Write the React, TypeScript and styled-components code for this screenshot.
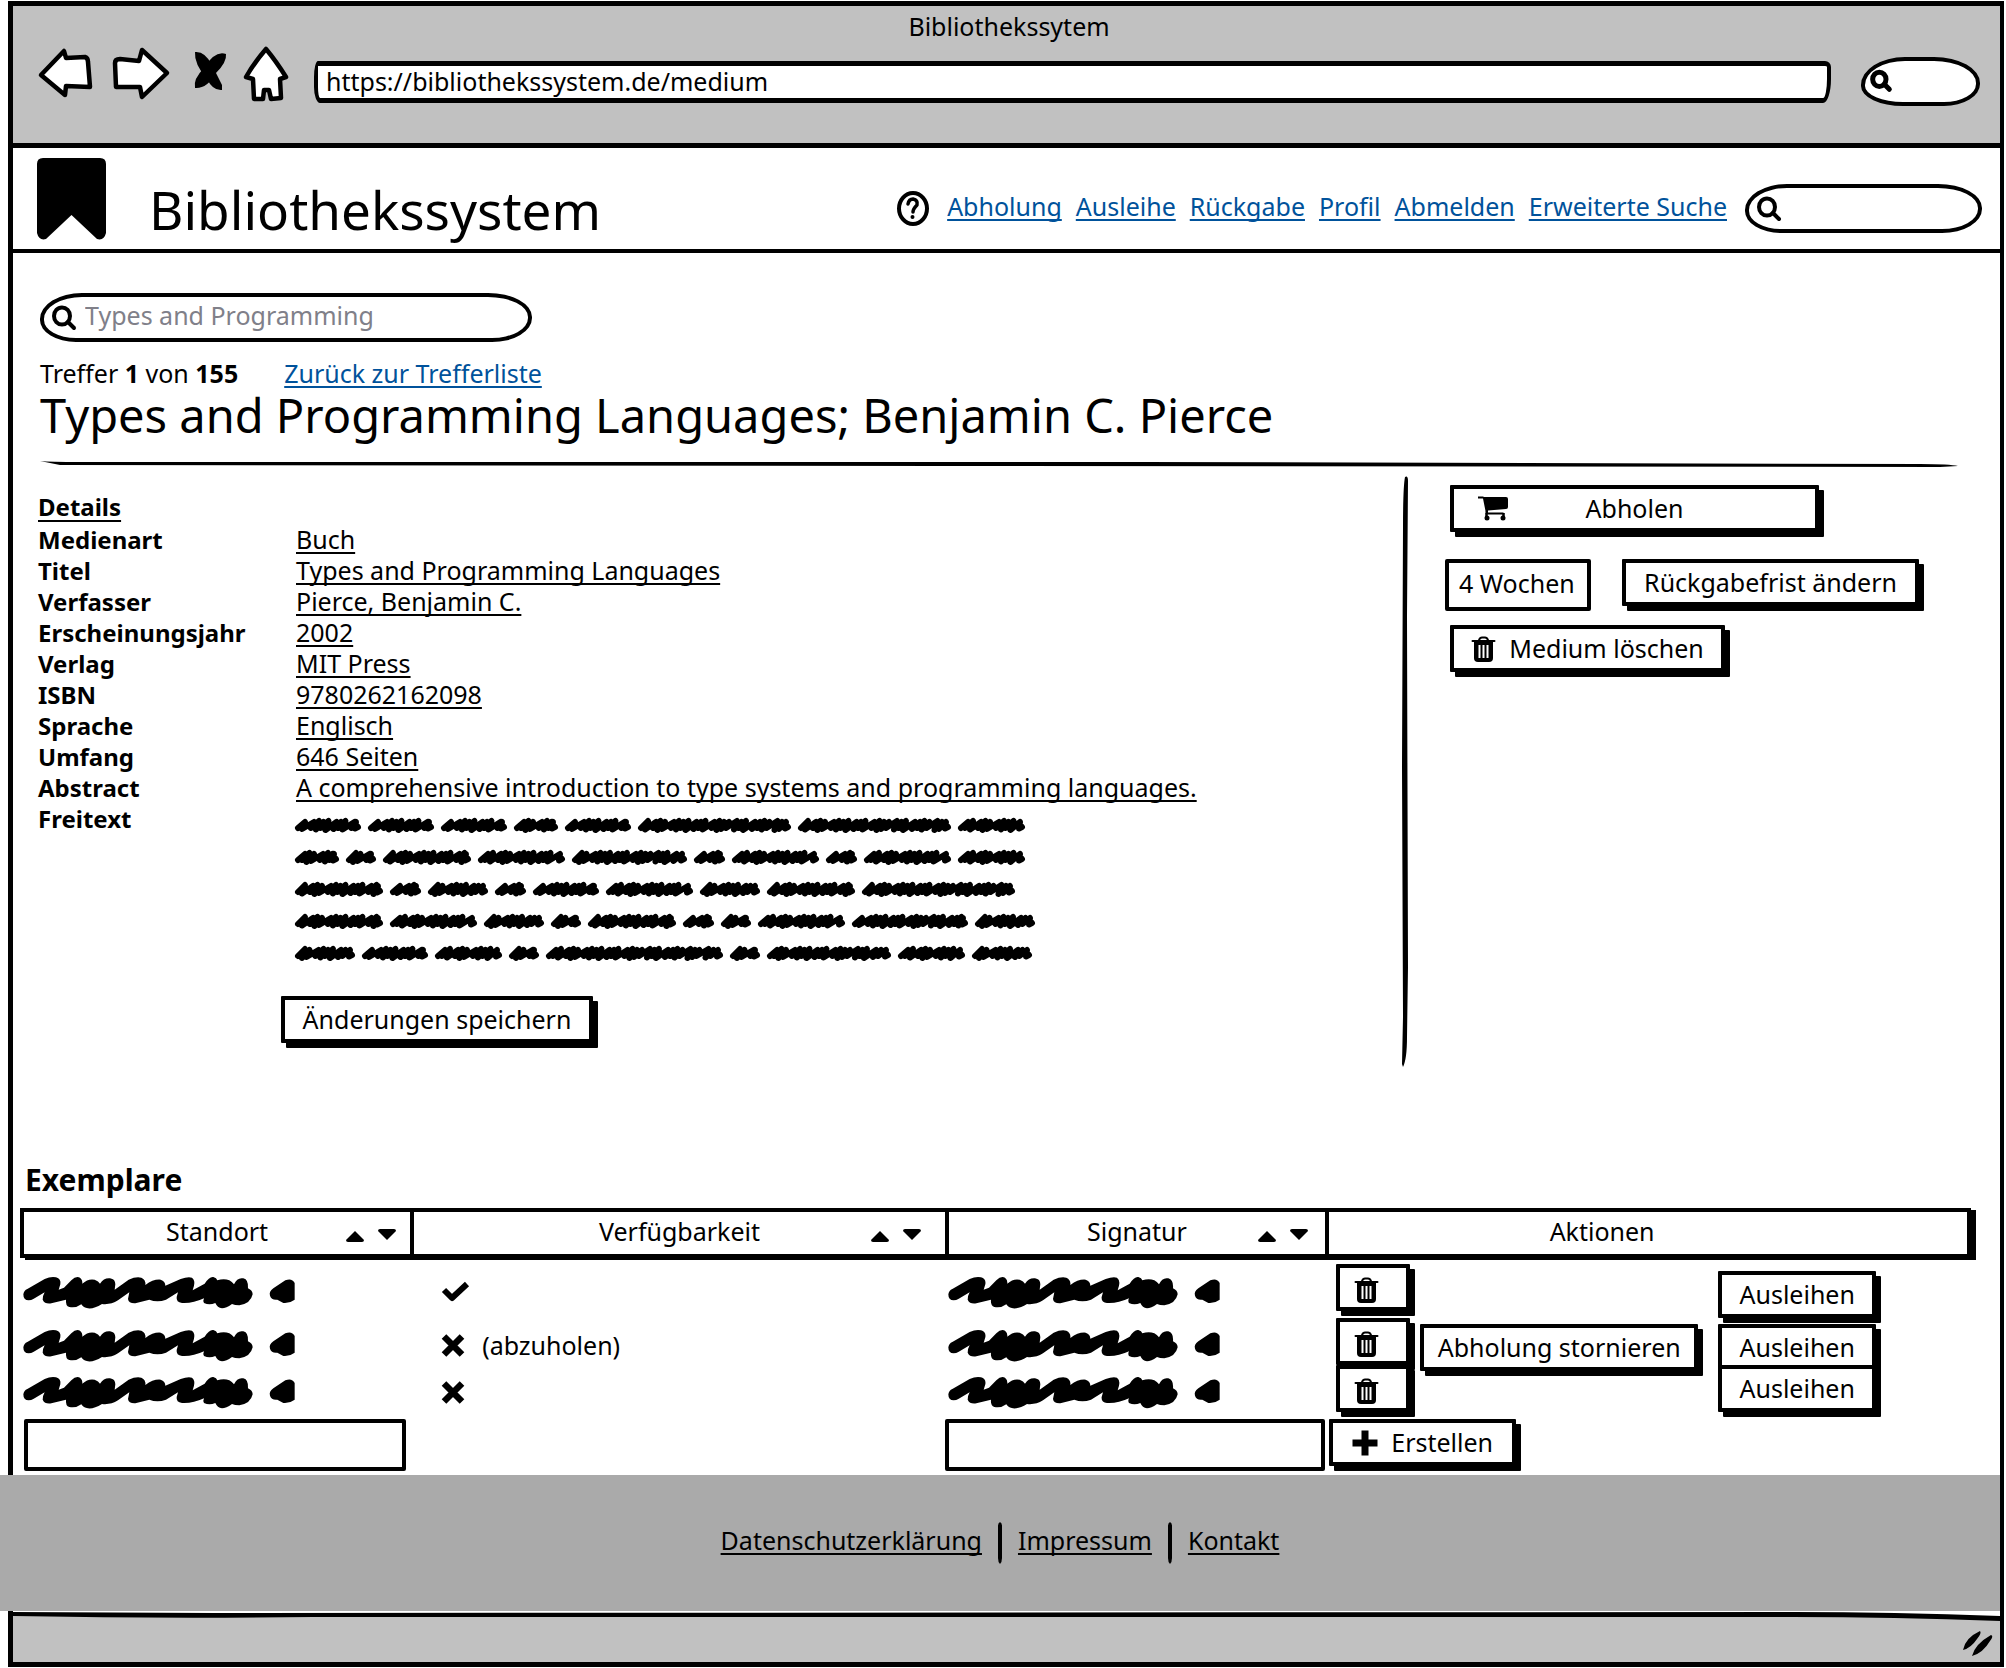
import React from 'react';
import styled, { createGlobalStyle } from 'styled-components';

const ink = '#000';
const chrome = '#c1c1c1';
const linkBlue = '#00529b';

const GlobalStyle = createGlobalStyle`
  *, *::before, *::after { box-sizing: border-box; }
  body {
    margin: 0;
    background: #fff;
    color: ${ink};
    font-family: 'Noto Sans', 'Open Sans', sans-serif;
    font-size: 25px;
    line-height: 31px;
  }
  button, input { font: inherit; color: inherit; }
  svg { display: block; overflow: visible; flex: none; }
`;

const Window = styled.div`
  margin: 1px 2px 2px 8px;
  border: 5px solid ${ink};
  border-right-width: 4px;
`;

const Chrome = styled.header`
  padding: 5px 20px 28px 25px;
  background: ${chrome};
  border-bottom: 5px solid ${ink};
`;

const WindowTitle = styled.div`
  text-align: center;
`;

const Toolbar = styled.div`
  display: flex;
  align-items: center;
  margin-top: 5px;
`;

const BrowserButtons = styled.div`
  display: flex;
  gap: 20px;
  margin: 0 26px 14px 0;
`;

const PlainButton = styled.button`
  display: block;
  padding: 0;
  border: 0;
  background: none;
  cursor: pointer;
`;

const AddressBar = styled.input`
  flex: 1;
  min-width: 0;
  height: 42px;
  margin: 2px 30px 0 0;
  padding: 0 8px 3px;
  border: solid ${ink};
  border-width: 5px 4px;
  border-radius: 4px 6px 8px 6px / 16px 6px 24px 16px;
  background: #fff;
  outline: none;
`;

const Pill = styled.label<{ $width: number }>`
  display: flex;
  align-items: center;
  gap: 9px;
  width: ${p => p.$width}px;
  height: 49px;
  padding: 0 16px 0 ${p => (p.$width < 200 ? 6 : 8)}px;
  border: 4px solid ${ink};
  border-radius: ${p => (p.$width < 200 ? '44px 46px 36px 42px / 28px 26px 22px 20px' : '42px 44px 40px 36px / 26px 24px 24px 22px')};
  background: #fff;
`;

const PillInput = styled.input`
  flex: 1;
  width: 0;
  min-width: 0;
  padding: 0 0 4px;
  border: 0;
  background: transparent;
  outline: none;
  &::placeholder { color: #808089; opacity: 1; }
`;

const AppHeader = styled.div`
  display: flex;
  align-items: center;
  height: 105px;
  margin-right: -4px;
  padding: 0 22px 0 24px;
  border-bottom: 4px solid ${ink};
`;

const Brand = styled.h1`
  margin: 0 auto 0 43px;
  padding-top: 22px;
  font-size: 53px;
  line-height: 60px;
  font-weight: 400;
`;

const Nav = styled.nav`
  display: flex;
  align-items: center;
  gap: 18px;
  margin-top: 20px;
`;

const Link = styled.a<{ $tone?: string }>`
  color: ${p => p.$tone || ink};
  text-decoration: underline;
  text-decoration-thickness: 2px;
  text-underline-offset: 3px;
  text-decoration-skip-ink: none;
`;

const NavLinks = styled.div`
  display: flex;
  gap: 14px;
  padding-bottom: 4px;
`;

const Intro = styled.section`
  padding: 40px 42px 0 27px;
`;

const HitLine = styled.div`
  display: flex;
  gap: 46px;
  margin-top: 16px;
`;

const MediumTitle = styled.h2`
  margin: 1px 0 21px;
  font-size: 47px;
  line-height: 50px;
  font-weight: 400;
`;

const Columns = styled.div`
  display: grid;
  grid-template-columns: minmax(0, 1fr) 6px 592px;
`;

const Details = styled.section`
  padding: 24px 25px 0;
`;

const DetailsHeading = styled.h3`
  margin: 0;
  font-size: 24px;
  line-height: 32px;
  text-decoration: underline;
  text-decoration-thickness: 2px;
  text-underline-offset: 4px;
`;

const Fields = styled.dl`
  display: grid;
  grid-template-columns: 258px 1fr;
  margin: 1px 0 0;
`;

const Term = styled.dt`
  font-size: 24px;
  font-weight: 700;
`;

const Value = styled.dd`
  margin: 0;
`;

const FreeText = styled.div`
  display: grid;
  gap: 17px;
  padding-top: 15px;
`;

const ScribbleLine = styled.div`
  display: flex;
  gap: 9px;
`;

const SaveRow = styled.div`
  padding: 35px 0 0 243px;
`;

const Button = styled.button<{ $width?: number }>`
  display: flex;
  align-items: center;
  justify-content: center;
  gap: 13px;
  width: ${p => (p.$width ? `${p.$width}px` : 'auto')};
  height: 47px;
  padding: 0 18px;
  border: 4px solid ${ink};
  border-radius: 1px;
  background: #fff;
  box-shadow: 5px 5px 0 ${ink};
  white-space: nowrap;
  cursor: pointer;
`;

const SpreadButton = styled(Button)`
  display: grid;
  grid-template-columns: 30px 1fr 30px;
  padding: 0 24px;
`;

const IconButton = styled(Button)`
  justify-content: flex-start;
  padding: 4px 0 0 14px;
`;

const Aside = styled.aside`
  display: grid;
  align-content: start;
  gap: 14px;
  padding: 18px 0 0 37px;
`;

const AsideRow = styled.div<{ $indent?: number; $after?: number }>`
  display: flex;
  align-items: flex-start;
  gap: 31px;
  padding-left: ${p => p.$indent || 0}px;
  margin-bottom: ${p => p.$after || 0}px;
`;

const BoxInput = styled.input<{ $width: string }>`
  display: block;
  width: ${p => p.$width};
  height: 52px;
  padding: 0 0 4px 10px;
  border: 4px solid ${ink};
  border-radius: 2px;
  background: #fff;
  outline: none;
`;

const Copies = styled.section`
  padding: 95px 29px 0 7px;
`;

const CopiesHeading = styled.h3`
  margin: 0 0 10px 5px;
  font-size: 30px;
  line-height: 36px;
`;

const Table = styled.table`
  width: 100%;
  table-layout: fixed;
  border-collapse: separate;
  border-spacing: 0;
`;

const HeadCell = styled.th<{ $width?: string }>`
  width: ${p => p.$width || 'auto'};
  height: 50px;
  padding: 0;
  border: solid ${ink};
  border-width: 4px 0 4px 4px;
  background: #fff;
  box-shadow: 5px 2px 0 ${ink};
  font-weight: 400;
  &:last-child { border-right-width: 4px; }
`;

const HeadContent = styled.div<{ $end?: number; $inset?: number }>`
  display: grid;
  grid-template-columns: 1fr auto 1fr;
  align-items: center;
  padding: 0 ${p => p.$inset || 0}px 3px 0;
  > :last-child { margin-right: ${p => p.$end || 0}px; }
`;

const HeadLabel = styled.span`
  grid-column: 2;
`;

const SortButtons = styled.div`
  display: flex;
  gap: 14px;
  justify-content: flex-end;
  padding-top: 8px;
`;

const Cell = styled.td<{ $height?: number; $lead?: number; $side?: number; $top?: boolean }>`
  height: ${p => p.$height || 56}px;
  padding: ${p => p.$lead || 0}px ${p => p.$side ?? 4}px 0;
  vertical-align: ${p => (p.$top ? 'top' : 'middle')};
`;

const ActionCell = styled.td<{ $indent: number; $lead?: number }>`
  padding: ${p => p.$lead || 0}px 0 0 ${p => p.$indent}px;
  vertical-align: top;
`;

const Actions = styled.div`
  display: grid;
  grid-template-columns: 74px 278px 168px;
  column-gap: 10px;
  align-items: start;
`;

const Lowered = styled.div<{ $by: number; $column: number }>`
  grid-column: ${p => p.$column};
  padding-left: ${p => (p.$column === 3 ? 10 : 0)}px;
  margin-top: ${p => p.$by}px;
  margin-bottom: -${p => p.$by}px;
`;

const Availability = styled.div`
  display: flex;
  align-items: center;
  gap: 18px;
  padding-left: 28px;
`;

const Footer = styled.footer`
  display: flex;
  justify-content: center;
  align-items: center;
  gap: 16px;
  height: 136px;
  margin-left: -13px;
  background: #aaa;
`;

const FooterLink = styled(Link)`
  padding-bottom: 6px;
`;

const StatusBar = styled.div`
  height: 51px;
  background: ${chrome};
`;

const Grip = styled.div`
  display: flex;
  justify-content: flex-end;
  padding: 9px 7px 0 0;
`;

const strokeProps = { fill: 'none', stroke: ink, strokeLinecap: 'round', strokeLinejoin: 'round' } as const;

const SearchIcon = ({ size = 24, weight = 4 }: { size?: number; weight?: number }) => (
  <svg width={size} height={size} viewBox="0 0 24 24" {...strokeProps} strokeWidth={weight}>
    <ellipse cx="10" cy="10" rx="8" ry="8.5" />
    <path d="M16 16 L22 22" />
  </svg>
);

const TrashIcon = () => (
  <svg width="25" height="26" viewBox="0 0 25 26">
    <path d="M1.500 5 H23.500 M8 4 Q9 1.500 11 1.500 H14 Q16 1.500 17 4" {...strokeProps} strokeWidth={2} />
    <path d="M3 5 H22 V22 Q22 26 18 26 H7 Q3 26 3 22Z" fill={ink} />
    <path d="M8.500 9 V22 M12.500 9 V22 M16.500 9 V22" stroke="#fff" strokeWidth="2" />
  </svg>
);

const CartIcon = () => (
  <svg width="30" height="25" viewBox="0 0 30 25">
    <path d="M6 1 H28 Q30 1 30 3 V11 Q30 13 28 13 L10 14.500 V16.500 H25 Q27 17 26 18.500 H10 Q7 18.500 7.500 15 L5 2.500 H0 V0.500 H5Z" fill={ink} />
    <path d="M8.500 17 V22 M25.500 17 V22" stroke={ink} strokeWidth="2.500" />
    <circle cx="9" cy="22" r="2.500" fill={ink} />
    <circle cx="25" cy="22" r="2.500" fill={ink} />
  </svg>
);

const PlusIcon = () => (
  <svg width="26" height="26" viewBox="0 0 26 26" {...strokeProps} strokeWidth={7} strokeLinecap="butt">
    <path d="M13 0.500 V25.500 M0.500 13 H25.500" />
  </svg>
);

const CheckIcon = () => (
  <svg width="27" height="22" viewBox="0 0 27 22" {...strokeProps} strokeWidth={6} strokeLinecap="butt">
    <path d="M2 9 L10 17 L25 3" />
  </svg>
);

const CrossIcon = () => (
  <svg width="22" height="21" viewBox="0 0 22 21" {...strokeProps} strokeWidth={6.500} strokeLinecap="butt">
    <path d="M2 1.500 L20 19.500 M20 1.500 L2 19.500" />
  </svg>
);

/* One hand-scrawled word of the given width. */
const Scribble = ({ width }: { width: number }) => {
  const points: string[] = ['2,10'];
  const rise = [4, 3, 4, 3, 4];
  const fall = [10, 11.5, 10, 12, 11];
  const steps = [5, 8, 4.5, 4.5, 9, 5, 4.5];
  let x = 9;
  let i = width % 5;
  while (x < width - 5) {
    points.push(`${x},${rise[i % 5]}`);
    points.push(`${Math.max(x - 3, 4)},${fall[i % 5]}`);
    x += steps[i % 7];
    i += 1;
  }
  points.push(`${width - 4},4`, `${width - 5},10.5`, `${width - 2},9`);
  return (
    <svg width={width} height="15" viewBox={`0 0 ${width} 15`} {...strokeProps} strokeWidth={6}>
      <polyline points={points.join(' ')} />
    </svg>
  );
};

const BigScribble = () => (
  <svg width="272" height="35" viewBox="4 50 816 105" fill={ink}>
    <path d="M18 126 Q2 126 2 108 Q4 96 14 92 L66 62 Q84 54 100 57 Q116 62 113 78 L108 94 L124 88 L146 66 Q160 52 172 58 Q180 64 179 76 Q196 60 216 64 Q228 68 232 76 Q244 58 262 60 Q278 62 278 78 L276 94 L318 64 Q340 54 356 58 Q370 64 368 80 Q392 62 414 64 Q428 68 428 82 L474 62 Q496 54 508 58 Q518 66 514 82 L510 96 L546 76 Q560 54 572 56 Q582 58 584 66 Q604 60 620 66 Q630 72 634 78 Q644 56 662 60 Q678 64 676 90 Q690 96 690 108 Q684 136 650 141 Q636 141 628 137 Q610 150 598 150 Q584 148 578 134 Q560 142 544 134 Q540 128 544 120 Q510 136 478 134 Q460 132 462 116 L466 102 L430 124 Q404 134 380 124 L338 135 Q318 136 316 122 L320 102 L286 126 Q264 140 238 137 Q214 152 196 150 Q182 148 176 138 Q160 150 140 146 Q128 142 130 124 L86 135 Q66 138 60 124 Q60 112 66 102 L32 122 Q26 126 18 126Z" />
    <path d="M742 112 Q738 100 752 90 L788 66 Q808 58 816 74 V124 Q800 136 782 134 L764 124 Q746 126 742 112Z" />
  </svg>
);

const freeText = [
  [64, 64, 64, 42, 64, 151, 151, 65],
  [42, 28, 86, 85, 113, 29, 85, 29, 85, 65],
  [86, 29, 58, 29, 64, 85, 58, 86, 151],
  [86, 85, 58, 28, 86, 29, 28, 85, 114, 58],
  [58, 64, 65, 28, 175, 28, 122, 65, 58],
];

const fields: [string, string][] = [
  ['Medienart', 'Buch'],
  ['Titel', 'Types and Programming Languages'],
  ['Verfasser', 'Pierce, Benjamin C.'],
  ['Erscheinungsjahr', '2002'],
  ['Verlag', 'MIT Press'],
  ['ISBN', '9780262162098'],
  ['Sprache', 'Englisch'],
  ['Umfang', '646 Seiten'],
  ['Abstract', 'A comprehensive introduction to type systems and programming languages.'],
];

const navItems = ['Abholung', 'Ausleihe', 'Rückgabe', 'Profil', 'Abmelden', 'Erweiterte Suche'];

const copies = [
  { height: 60, lead: 8, actionLead: 6, drop: 7, available: true, note: '', reserved: false },
  { height: 46, lead: 8, actionLead: 0, drop: 6, available: false, note: '(abzuholen)', reserved: true },
  { height: 54, lead: 0, actionLead: 0, drop: 0, available: false, note: '', reserved: false },
];

const Sort = () => (
  <SortButtons>
    <PlainButton aria-label="Aufsteigend sortieren">
      <svg width="18" height="12" viewBox="0 0 18 12"><path d="M9 1 L18 10 Q18 12 16 12 H2 Q0 12 0 10Z" fill={ink} /></svg>
    </PlainButton>
    <PlainButton aria-label="Absteigend sortieren">
      <svg width="18" height="12" viewBox="0 0 18 12"><path d="M9 10 L18 1 Q18 -1 16 -1 H2 Q0 -1 0 1Z" fill={ink} /></svg>
    </PlainButton>
  </SortButtons>
);

const FooterDivider = () => (
  <svg width="4" height="42" viewBox="0 0 4 42"><path d="M2 0 Q4 1 4 4 V36 Q4 40 2 42 Q0 40 0 36 V4 Q0 1 2 0Z" fill={ink} /></svg>
);

export default function App() {
  return (
    <>
      <GlobalStyle />
      <Window>
        <Chrome>
          <WindowTitle>Bibliothekssytem</WindowTitle>
          <Toolbar>
            <BrowserButtons>
              <PlainButton aria-label="Zurück">
                <svg width="54" height="54" viewBox="0 0 54 54" {...strokeProps} fill="#fff" strokeWidth={4.500}>
                  <path d="M3 28 L26 4 L28 11 L47 10 Q50 11 50 15 L52 40 L28 39 L27 48Z" />
                </svg>
              </PlainButton>
              <PlainButton aria-label="Vorwärts">
                <svg width="57" height="54" viewBox="0 0 57 54" {...strokeProps} fill="#fff" strokeWidth={4.500}>
                  <path d="M3 16 Q3 12 8 12 L27 14 L30 3 L55 26 L30 50 L28 40 L4 40Z" />
                </svg>
              </PlainButton>
              <PlainButton aria-label="Abbrechen">
                <svg width="35" height="54" viewBox="0 0 35 54" fill={ink}>
                  <path d="M6 5 Q16 4 23 18 L33 38 L33 43 Q24 44 18 32 Q5 17 6 5Z" />
                  <path d="M37 7 Q38 15 27 26 Q18 42 6 41 Q4 32 15 21 Q26 3 37 7Z" />
                </svg>
              </PlainButton>
              <PlainButton aria-label="Startseite">
                <svg width="44" height="54" viewBox="0 0 44 54" {...strokeProps} fill="#fff" strokeWidth={4.500}>
                  <path d="M22 2 Q32 14 42 30 L36 32 L37 51 L27 52 L25 43 L20 43 L19 52 L10 52 L9 32 L2 30 Q10 16 22 2Z" />
                </svg>
              </PlainButton>
            </BrowserButtons>
            <AddressBar aria-label="Adresse" defaultValue="https://bibliothekssystem.de/medium" />
            <Pill $width={119}>
              <SearchIcon size={20} weight={6} />
              <PillInput aria-label="Websuche" />
            </Pill>
          </Toolbar>
        </Chrome>

        <AppHeader>
          <svg width="69" height="82" viewBox="0 0 69 82">
            <path d="M0 6 Q0 0 6 0 H63 Q69 0 69 6 V75 Q67 83 60 81 L34.500 57 L9 81 Q2 83 0 75Z" fill={ink} />
          </svg>
          <Brand>Bibliothekssystem</Brand>
          <Nav>
            <svg width="32" height="35" viewBox="0 0 32 35" {...strokeProps}>
              <ellipse cx="16" cy="17.500" rx="14" ry="15.500" strokeWidth="4" />
              <path d="M11 13 Q12 8 16 8 Q21 9 20 14 Q16 18 16 21" strokeWidth="3.500" />
              <circle cx="15.500" cy="26" r="1" strokeWidth="2" />
            </svg>
            <NavLinks>
              {navItems.map(item => (
                <Link key={item} href="#" $tone={linkBlue}>{item}</Link>
              ))}
            </NavLinks>
            <Pill $width={237}>
              <SearchIcon />
              <PillInput aria-label="Suche" />
            </Pill>
          </Nav>
        </AppHeader>

        <main>
          <Intro>
            <Pill $width={492}>
              <SearchIcon />
              <PillInput aria-label="Katalogsuche" placeholder="Types and Programming" />
            </Pill>
            <HitLine>
              <span>Treffer <b>1</b> von <b>155</b></span>
              <Link href="#" $tone={linkBlue}>Zurück zur Trefferliste</Link>
            </HitLine>
            <MediumTitle>Types and Programming Languages; Benjamin C. Pierce</MediumTitle>
            <svg width="100%" height="6" viewBox="0 0 1918 6" preserveAspectRatio="none">
              <path d="M0 0 Q10 1 40 1 L1100 1 L1880 3 Q1910 3 1918 5 L1900 6 L900 5 L20 4Z" fill={ink} />
            </svg>
          </Intro>

          <Columns>
            <Details>
              <DetailsHeading>Details</DetailsHeading>
              <Fields>
                {fields.map(([term, value]) => (
                  <React.Fragment key={term}>
                    <Term>{term}</Term>
                    <Value><Link href="#">{value}</Link></Value>
                  </React.Fragment>
                ))}
                <Term>Freitext</Term>
                <Value>
                  <FreeText>
                    {freeText.map((words, line) => (
                      <ScribbleLine key={line}>
                        {words.map((width, word) => <Scribble key={word} width={width} />)}
                      </ScribbleLine>
                    ))}
                  </FreeText>
                </Value>
              </Fields>
              <SaveRow>
                <Button $width={312}>Änderungen speichern</Button>
              </SaveRow>
            </Details>
            <svg width="6" height="600" viewBox="0 0 6 600">
              <path d="M3 10 Q6 8 6 14 L5 150 L6 500 L5 570 Q5 592 1 600 L0 597 L1 550 L0 300 L1 60 Q1 20 3 10Z" fill={ink} />
            </svg>
            <Aside>
              <AsideRow $indent={5} $after={13}>
                <SpreadButton $width={369}><CartIcon />Abholen</SpreadButton>
              </AsideRow>
              <AsideRow>
                <BoxInput $width="146px" aria-label="Leihfrist" defaultValue="4 Wochen" />
                <Button $width={297}>Rückgabefrist ändern</Button>
              </AsideRow>
              <AsideRow $indent={5}>
                <Button $width={275}><TrashIcon />Medium löschen</Button>
              </AsideRow>
            </Aside>
          </Columns>

          <Copies>
            <CopiesHeading>Exemplare</CopiesHeading>
            <Table>
              <thead>
                <tr>
                  <HeadCell $width="20%"><HeadContent $end={14}><HeadLabel>Standort</HeadLabel><Sort /></HeadContent></HeadCell>
                  <HeadCell $width="27.4%"><HeadContent $end={24}><HeadLabel>Verfügbarkeit</HeadLabel><Sort /></HeadContent></HeadCell>
                  <HeadCell $width="19.5%"><HeadContent $end={17}><HeadLabel>Signatur</HeadLabel><Sort /></HeadContent></HeadCell>
                  <HeadCell><HeadContent $inset={92}><HeadLabel>Aktionen</HeadLabel></HeadContent></HeadCell>
                </tr>
              </thead>
              <tbody>
                {copies.map((copy, index) => (
                  <tr key={index}>
                    <Cell $height={copy.height} $lead={copy.lead}><BigScribble /></Cell>
                    <Cell $height={copy.height} $lead={copy.lead}>
                      <Availability>
                        {copy.available ? <CheckIcon /> : <CrossIcon />}
                        {copy.note}
                      </Availability>
                    </Cell>
                    <Cell $height={copy.height} $lead={copy.lead}><BigScribble /></Cell>
                    <ActionCell $indent={11} $lead={copy.actionLead}>
                      <Actions>
                        <IconButton $width={74} aria-label="Löschen"><TrashIcon /></IconButton>
                        {copy.reserved && (
                          <Lowered $by={copy.drop} $column={2}><Button $width={278}>Abholung stornieren</Button></Lowered>
                        )}
                        <Lowered $by={copy.drop} $column={3}><Button $width={158}>Ausleihen</Button></Lowered>
                      </Actions>
                    </ActionCell>
                  </tr>
                ))}
                <tr>
                  <Cell $top><BoxInput $width="100%" aria-label="Standort" /></Cell>
                  <Cell />
                  <Cell $top $side={0}><BoxInput $width="100%" aria-label="Signatur" /></Cell>
                  <ActionCell $indent={4}>
                    <Button $width={187}><PlusIcon />Erstellen</Button>
                  </ActionCell>
                </tr>
              </tbody>
            </Table>
          </Copies>
        </main>

        <Footer>
          <FooterLink href="#">Datenschutzerklärung</FooterLink>
          <FooterDivider />
          <FooterLink href="#">Impressum</FooterLink>
          <FooterDivider />
          <FooterLink href="#">Kontakt</FooterLink>
        </Footer>
        <StatusBar>
          <svg width="100%" height="10" viewBox="0 0 1987 10" preserveAspectRatio="none">
            <path d="M0 0 H1987 V6 Q1860 2 1800 2 H0Z" fill="#fff" />
            <path d="M0 1 L200 2 L1780 1 Q1880 1 1987 5 V10 Q1880 6 1780 6 L300 6 Q150 8 0 5Z" fill={ink} />
          </svg>
          <Grip>
            <svg width="30" height="26" viewBox="0 0 30 26" fill={ink}>
              <path d="M0 20 Q2 8 17 1 Q19 3 14 9 Q8 18 0 20Z M9 26 Q12 14 28 5 Q31 6 27 11 Q20 23 9 26Z" />
            </svg>
          </Grip>
        </StatusBar>
      </Window>
    </>
  );
}
